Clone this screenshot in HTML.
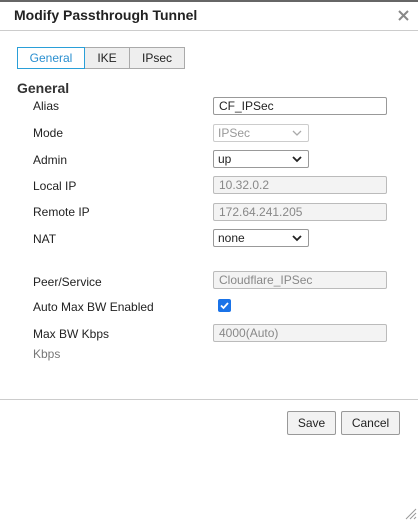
<!DOCTYPE html>
<html><head><style>
*{margin:0;padding:0;box-sizing:border-box}
body{width:418px;height:522px;background:#fff;font-family:"Liberation Sans",sans-serif;font-size:12px;color:#222;position:relative;overflow:hidden}
.a{position:absolute;white-space:nowrap}
.top{left:0;top:0;width:418px;height:2px;background:#666}
.hdr{left:0;top:30px;width:418px;height:1px;background:#ccc}
.title{left:14px;top:7px;font-size:14px;font-weight:bold;color:#222}
.tab{top:47px;height:22px;border:1px solid #aaa;background:#eee;text-align:center;line-height:20px;font-size:12px}
.lbl{left:33px}
.in{left:213px;height:18px;border:1px solid #bbb;border-radius:2px;padding-left:5px;line-height:16px}
.dis{background:#f3f3f3;color:#888}
.sel{left:213px;width:96px;height:18px;border:1px solid #999;border-radius:2px;padding-left:4px;line-height:16px;background:#fff}
.sel svg{position:absolute;right:6px;top:5px}
.btn{top:411px;height:24px;border:1px solid #999;border-radius:2px;background:#f2f2f2;text-align:center;line-height:22px}
</style></head><body>
<div class="a top"></div>
<div class="a title">Modify Passthrough Tunnel</div>
<svg class="a" style="left:398px;top:10px" width="11" height="11"><path d="M1 1L10 10M10 1L1 10" stroke="#888" stroke-width="2"/></svg>
<div class="a hdr"></div>
<div class="a tab" style="left:17px;width:68px;border-color:#2a9fd8;background:#fff;color:#2a8fd0;z-index:2">General</div>
<div class="a tab" style="left:84px;width:46px">IKE</div>
<div class="a tab" style="left:129px;width:56px">IPsec</div>
<div class="a" style="left:17px;top:80px;font-size:14px;font-weight:bold;color:#333">General</div>
<div class="a lbl" style="top:99px">Alias</div>
<div class="a in" style="top:97px;width:174px;border-color:#999">CF_IPSec</div>
<div class="a lbl" style="top:126px">Mode</div>
<div class="a sel" style="top:124px;border-color:#ccc;color:#999">IPSec<svg width="10" height="7"><path d="M1 1l4 4 4-4" stroke="#aaa" fill="none" stroke-width="1.3"/></svg></div>
<div class="a lbl" style="top:153px">Admin</div>
<div class="a sel" style="top:150px">up<svg width="10" height="7"><path d="M1 1l4 4 4-4" stroke="#222" fill="none" stroke-width="1.8"/></svg></div>
<div class="a lbl" style="top:179px">Local IP</div>
<div class="a in dis" style="top:176px;width:174px">10.32.0.2</div>
<div class="a lbl" style="top:205px">Remote IP</div>
<div class="a in dis" style="top:203px;width:174px">172.64.241.205</div>
<div class="a lbl" style="top:232px">NAT</div>
<div class="a sel" style="top:229px">none<svg width="10" height="7"><path d="M1 1l4 4 4-4" stroke="#222" fill="none" stroke-width="1.8"/></svg></div>
<div class="a lbl" style="top:275px">Peer/Service</div>
<div class="a in dis" style="top:271px;width:174px">Cloudflare_IPSec</div>
<div class="a lbl" style="top:300px">Auto Max BW Enabled</div>
<div class="a" style="left:218px;top:299px;width:13px;height:13px;background:#1a73e8;border-radius:2px"><svg width="13" height="13"><path d="M3 6.5l2.5 2.5 4.5-5" stroke="#fff" fill="none" stroke-width="1.8"/></svg></div>
<div class="a lbl" style="top:327px">Max BW Kbps</div>
<div class="a in dis" style="top:324px;width:174px">4000(Auto)</div>
<div class="a lbl" style="top:347px;color:#777">Kbps</div>
<div class="a" style="left:0;top:399px;width:418px;height:1px;background:#ccc"></div>
<div class="a btn" style="left:287px;width:49px">Save</div>
<div class="a btn" style="left:341px;width:59px">Cancel</div>
<svg class="a" style="left:403px;top:506px" width="14" height="14"><path d="M13 3L3 13M13 7L7 13M13 11L11 13" stroke="#999" stroke-width="1"/></svg>
</body></html>
